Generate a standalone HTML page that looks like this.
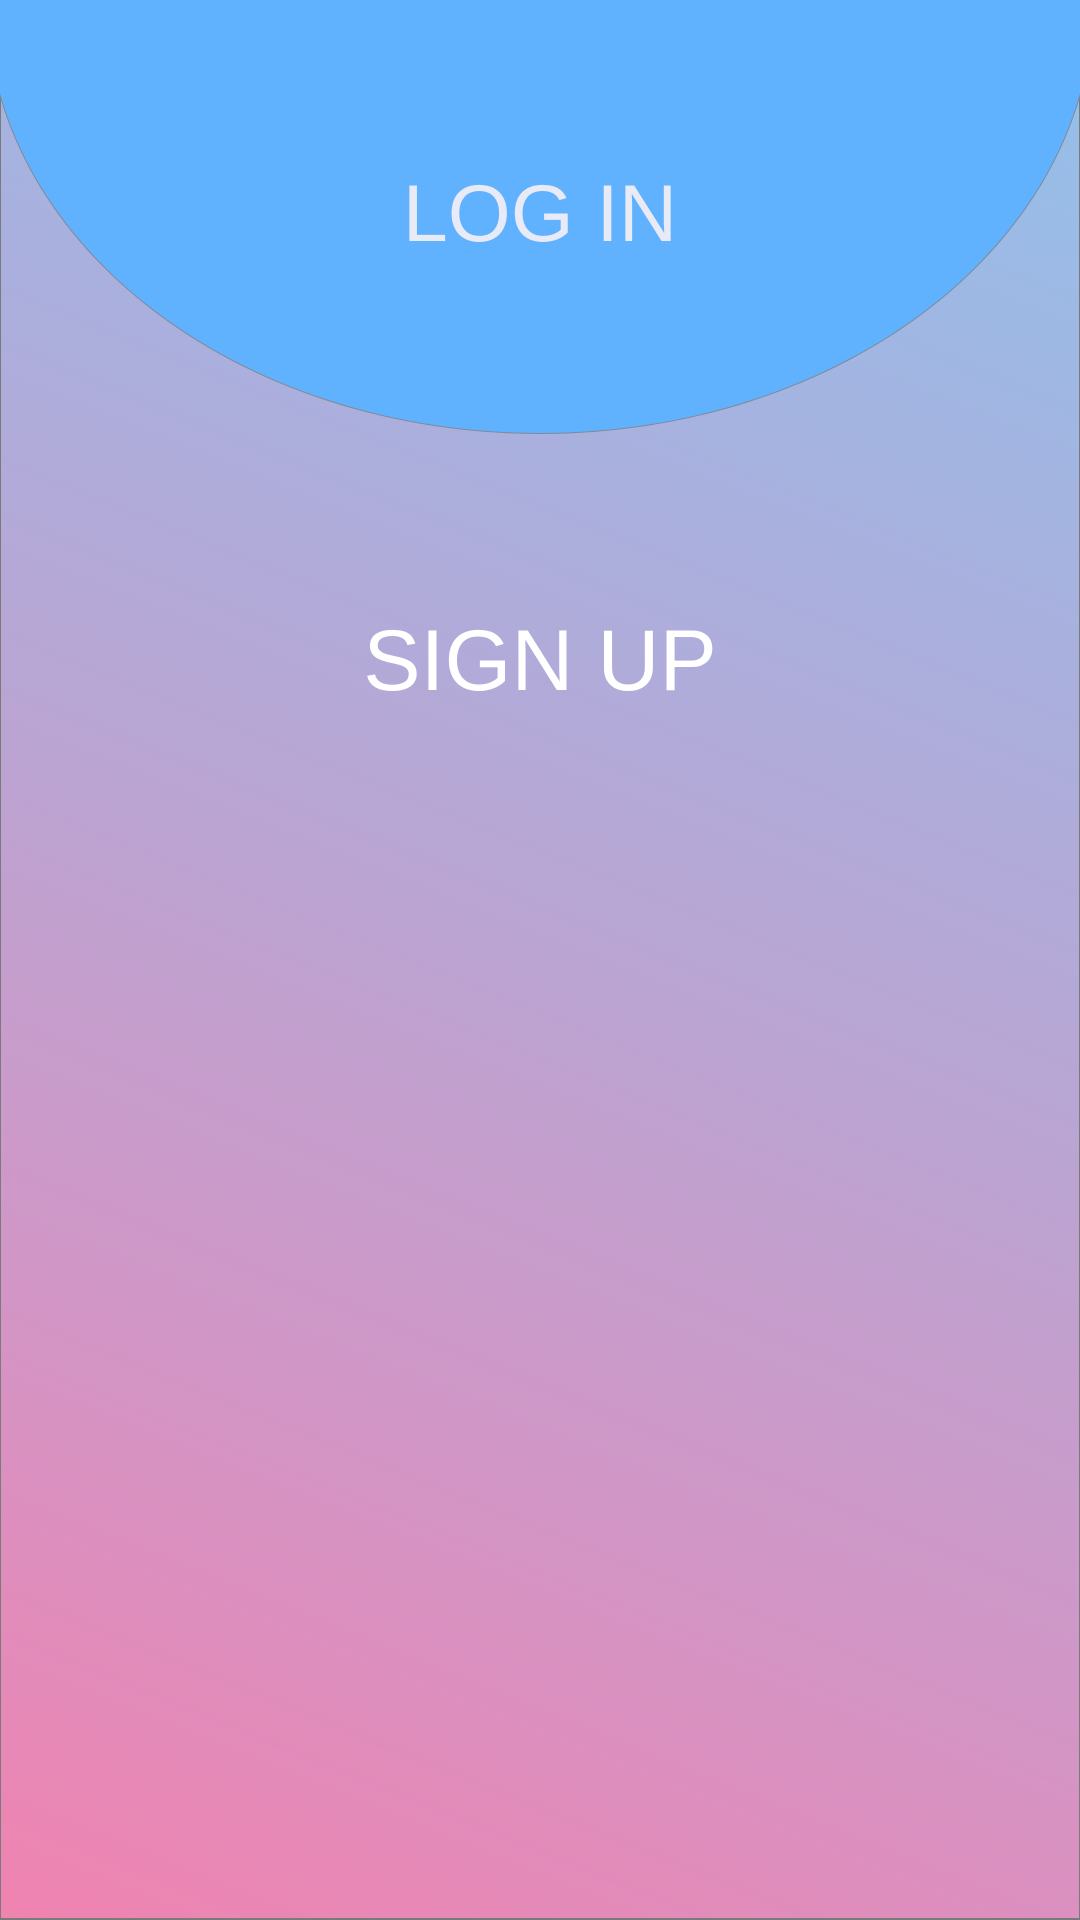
<!DOCTYPE html>
<html><head><style>
html,body{margin:0;padding:0;}
body{width:1080px;height:1920px;position:relative;overflow:hidden;font-family:"Liberation Sans",sans-serif;}
.bg{position:absolute;left:0;top:0;width:1078px;height:1917px;border:1px solid #7a7a7a;border-bottom-width:2px;
background:linear-gradient(22deg,#f083b0 0%,#d494c4 25%,#bba4d2 50%,#a9b0de 72%,#92c1ea 100%);}
.ell{position:absolute;left:-13px;top:-433px;width:1106px;height:866px;border-radius:50%;background:#60b2fe;box-shadow:0 0 0 1px #808a96;}
.t{position:absolute;left:0;width:1080px;text-align:center;line-height:1;}
</style></head><body>
<div class="bg"></div>
<div class="ell"></div>
<div class="t" style="top:174px;font-size:81px;color:#e8eaf6;">LOG IN</div>
<div class="t" style="top:618px;font-size:86px;color:#ffffff;">SIGN UP</div>
</body></html>
